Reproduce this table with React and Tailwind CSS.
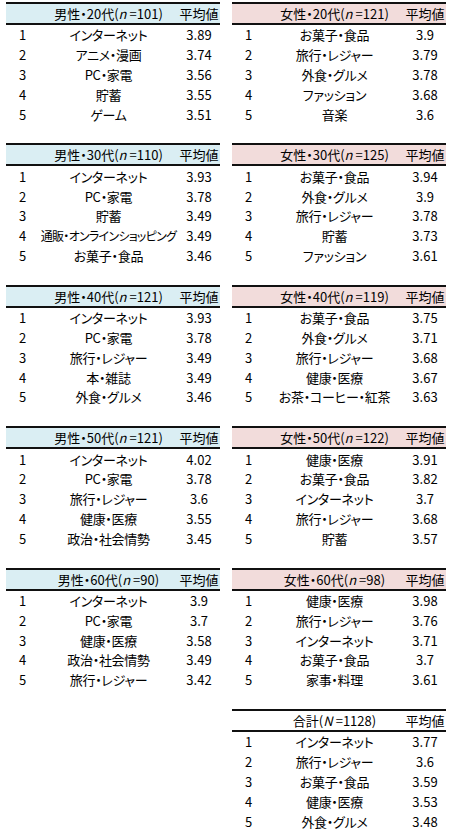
const left = [
  { label: '男性・20代', n: 'n', count: '101', rows: [['インターネット', '3.89'], ['アニメ・漫画', '3.74'], ['PC・家電', '3.56'], ['貯蓄', '3.55'], ['ゲーム', '3.51']] },
  { label: '男性・30代', n: 'n', count: '110', rows: [['インターネット', '3.93'], ['PC・家電', '3.78'], ['貯蓄', '3.49'], ['通販・オンラインショッピング', '3.49'], ['お菓子・食品', '3.46']] },
  { label: '男性・40代', n: 'n', count: '121', rows: [['インターネット', '3.93'], ['PC・家電', '3.78'], ['旅行・レジャー', '3.49'], ['本・雑誌', '3.49'], ['外食・グルメ', '3.46']] },
  { label: '男性・50代', n: 'n', count: '121', rows: [['インターネット', '4.02'], ['PC・家電', '3.78'], ['旅行・レジャー', '3.6'], ['健康・医療', '3.55'], ['政治・社会情勢', '3.45']] },
  { label: '男性・60代', n: 'n', count: '90', rows: [['インターネット', '3.9'], ['PC・家電', '3.7'], ['健康・医療', '3.58'], ['政治・社会情勢', '3.49'], ['旅行・レジャー', '3.42']] },
]

const right = [
  { label: '女性・20代', n: 'n', count: '121', rows: [['お菓子・食品', '3.9'], ['旅行・レジャー', '3.79'], ['外食・グルメ', '3.78'], ['ファッション', '3.68'], ['音楽', '3.6']] },
  { label: '女性・30代', n: 'n', count: '125', rows: [['お菓子・食品', '3.94'], ['外食・グルメ', '3.9'], ['旅行・レジャー', '3.78'], ['貯蓄', '3.73'], ['ファッション', '3.61']] },
  { label: '女性・40代', n: 'n', count: '119', rows: [['お菓子・食品', '3.75'], ['外食・グルメ', '3.71'], ['旅行・レジャー', '3.68'], ['健康・医療', '3.67'], ['お茶・コーヒー・紅茶', '3.63']] },
  { label: '女性・50代', n: 'n', count: '122', rows: [['健康・医療', '3.91'], ['お菓子・食品', '3.82'], ['インターネット', '3.7'], ['旅行・レジャー', '3.68'], ['貯蓄', '3.57']] },
  { label: '女性・60代', n: 'n', count: '98', rows: [['健康・医療', '3.98'], ['旅行・レジャー', '3.76'], ['インターネット', '3.71'], ['お菓子・食品', '3.7'], ['家事・料理', '3.61']] },
  { label: '合計', n: 'N', count: '1128', rows: [['インターネット', '3.77'], ['旅行・レジャー', '3.6'], ['お菓子・食品', '3.59'], ['健康・医療', '3.53'], ['外食・グルメ', '3.48']] },
]

function RankTable({ t, headBg }) {
  return (
    <div className="w-[214px] h-[122px]">
      <div className={`flex h-[23px] items-center border-t-2 border-b-2 border-[#111] ${headBg}`}>
        <div className="w-[33px]" />
        <div className="w-[139px] text-center whitespace-nowrap">
          {t.label}(<i>{t.n}</i><span className="ml-[3px]">=</span>{t.count})
        </div>
        <div className="flex-1 text-center whitespace-nowrap">平均値</div>
      </div>
      {t.rows.map((r, i) => (
        <div key={i} className="flex h-[19.8px] items-center">
          <div className="w-[33px] text-center">{i + 1}</div>
          <div
            className={
              r[0].length > 12
                ? 'w-[139px] text-center whitespace-nowrap text-[12px] tracking-[-0.06em]'
                : 'w-[139px] text-center whitespace-nowrap tracking-[-0.02em]'
            }
          >
            {r[0]}
          </div>
          <div className="flex-1 text-center">{r[1]}</div>
        </div>
      ))}
    </div>
  )
}

export default function App() {
  return (
    <div
      className="w-[452px] h-[832px] bg-white text-black text-[13px] leading-none pt-[2px] pl-[6px] flex gap-[12px] overflow-hidden [font-feature-settings:'palt']"
      style={{ fontFamily: '"Noto Sans CJK JP", "Noto Sans", sans-serif' }}
    >
      <div className="flex flex-col gap-[19.4px]">
        {left.map((t, i) => <RankTable key={i} t={t} headBg="bg-[#daeef3]" />)}
      </div>
      <div className="flex flex-col gap-[19.4px]">
        {right.map((t, i) => <RankTable key={i} t={t} headBg={i === 5 ? 'bg-white' : 'bg-[#f2dcdb]'} />)}
      </div>
    </div>
  )
}
